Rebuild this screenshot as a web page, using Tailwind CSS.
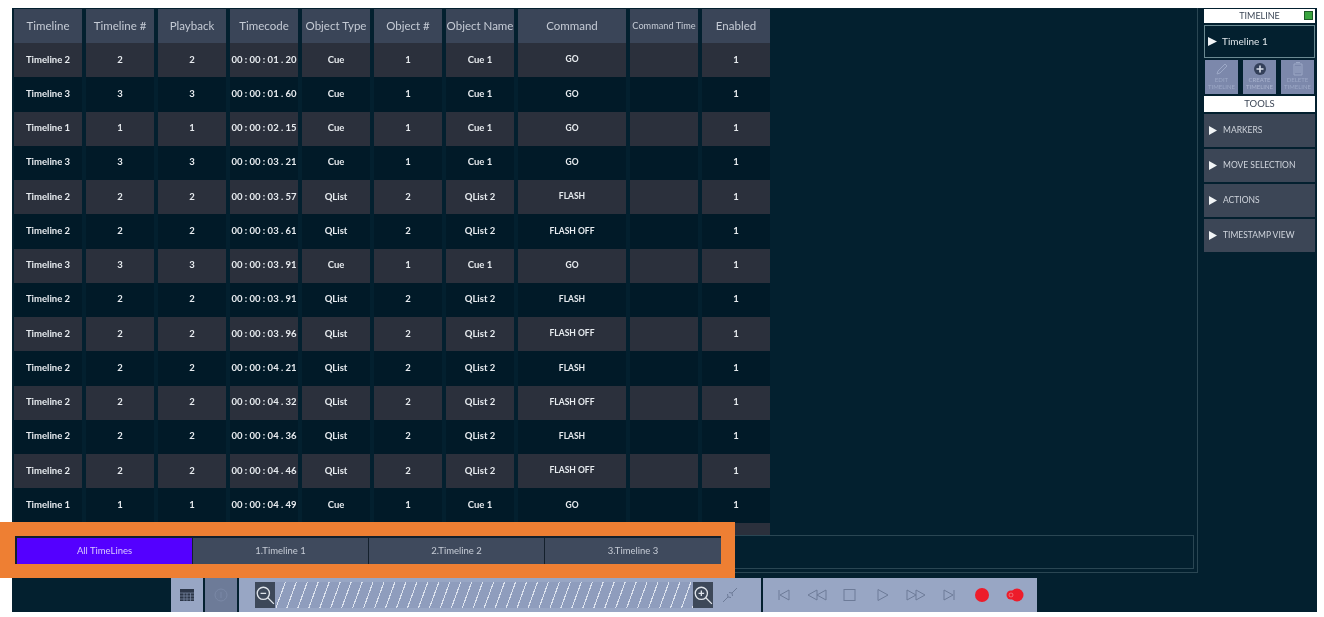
<!doctype html>
<html><head><meta charset="utf-8"><script src="https://cdn.jsdelivr.net/npm/@tailwindcss/browser@4"></script></head>
<body class="bg-white">
<div class="relative h-[617px] w-[1324px] overflow-hidden bg-white pl-3 pt-2 font-['Lato',sans-serif] blur-[0.3px]">
  <div class="flex h-[604px] w-[1305px] flex-col bg-[#03202f]">
    <div class="flex h-[565px]">
      <div class="flex w-[1186px] flex-col border-r border-b border-[#2a4653] pr-[3px]">
        <div class="h-[527px] overflow-hidden pl-[2px] pt-px whitespace-nowrap">
          <div class="grid h-[34px] w-[758px] grid-cols-[68px_68px_68px_68px_68px_68px_68px_108px_68px_68px] gap-x-1 text-center text-[11.5px] text-[#c5cbd5] [&>div]:flex [&>div]:items-center [&>div]:justify-center [&>div]:bg-[#3a4558]">
            <div>Timeline</div><div>Timeline #</div><div>Playback</div><div>Timecode</div><div>Object Type</div><div>Object #</div><div>Object Name</div><div>Command</div><div class="text-[9.2px]">Command Time</div><div>Enabled</div>
          </div>
          <div class="grid w-[758px] auto-rows-[34.25px] grid-cols-[68px_68px_68px_68px_68px_68px_68px_108px_68px_68px] gap-x-1 text-center text-[9.5px] font-bold text-[#e8ecf0] [&>div]:flex [&>div]:items-center [&>div]:justify-center [&>div]:pb-px [&>div:nth-child(10n+8)]:text-[8.5px] [&>div:nth-child(20n+1)]:bg-[#2b303c] [&>div:nth-child(20n+2)]:bg-[#2b303c] [&>div:nth-child(20n+3)]:bg-[#2b303c] [&>div:nth-child(20n+4)]:bg-[#2b303c] [&>div:nth-child(20n+5)]:bg-[#2b303c] [&>div:nth-child(20n+6)]:bg-[#2b303c] [&>div:nth-child(20n+7)]:bg-[#2b303c] [&>div:nth-child(20n+8)]:bg-[#2b303c] [&>div:nth-child(20n+9)]:bg-[#2b303c] [&>div:nth-child(20n+10)]:bg-[#2b303c] [&>div:nth-child(20n+11)]:bg-[#011a28] [&>div:nth-child(20n+12)]:bg-[#011a28] [&>div:nth-child(20n+13)]:bg-[#011a28] [&>div:nth-child(20n+14)]:bg-[#011a28] [&>div:nth-child(20n+15)]:bg-[#011a28] [&>div:nth-child(20n+16)]:bg-[#011a28] [&>div:nth-child(20n+17)]:bg-[#011a28] [&>div:nth-child(20n+18)]:bg-[#011a28] [&>div:nth-child(20n+19)]:bg-[#011a28] [&>div:nth-child(20n+20)]:bg-[#011a28]">
            <div>Timeline 2</div><div>2</div><div>2</div><div>00 : 00 : 01 . 20</div><div>Cue</div><div>1</div><div>Cue 1</div><div>GO</div><div></div><div>1</div>
            <div>Timeline 3</div><div>3</div><div>3</div><div>00 : 00 : 01 . 60</div><div>Cue</div><div>1</div><div>Cue 1</div><div>GO</div><div></div><div>1</div>
            <div>Timeline 1</div><div>1</div><div>1</div><div>00 : 00 : 02 . 15</div><div>Cue</div><div>1</div><div>Cue 1</div><div>GO</div><div></div><div>1</div>
            <div>Timeline 3</div><div>3</div><div>3</div><div>00 : 00 : 03 . 21</div><div>Cue</div><div>1</div><div>Cue 1</div><div>GO</div><div></div><div>1</div>
            <div>Timeline 2</div><div>2</div><div>2</div><div>00 : 00 : 03 . 57</div><div>QList</div><div>2</div><div>QList 2</div><div>FLASH</div><div></div><div>1</div>
            <div>Timeline 2</div><div>2</div><div>2</div><div>00 : 00 : 03 . 61</div><div>QList</div><div>2</div><div>QList 2</div><div>FLASH OFF</div><div></div><div>1</div>
            <div>Timeline 3</div><div>3</div><div>3</div><div>00 : 00 : 03 . 91</div><div>Cue</div><div>1</div><div>Cue 1</div><div>GO</div><div></div><div>1</div>
            <div>Timeline 2</div><div>2</div><div>2</div><div>00 : 00 : 03 . 91</div><div>QList</div><div>2</div><div>QList 2</div><div>FLASH</div><div></div><div>1</div>
            <div>Timeline 2</div><div>2</div><div>2</div><div>00 : 00 : 03 . 96</div><div>QList</div><div>2</div><div>QList 2</div><div>FLASH OFF</div><div></div><div>1</div>
            <div>Timeline 2</div><div>2</div><div>2</div><div>00 : 00 : 04 . 21</div><div>QList</div><div>2</div><div>QList 2</div><div>FLASH</div><div></div><div>1</div>
            <div>Timeline 2</div><div>2</div><div>2</div><div>00 : 00 : 04 . 32</div><div>QList</div><div>2</div><div>QList 2</div><div>FLASH OFF</div><div></div><div>1</div>
            <div>Timeline 2</div><div>2</div><div>2</div><div>00 : 00 : 04 . 36</div><div>QList</div><div>2</div><div>QList 2</div><div>FLASH</div><div></div><div>1</div>
            <div>Timeline 2</div><div>2</div><div>2</div><div>00 : 00 : 04 . 46</div><div>QList</div><div>2</div><div>QList 2</div><div>FLASH OFF</div><div></div><div>1</div>
            <div>Timeline 1</div><div>1</div><div>1</div><div>00 : 00 : 04 . 49</div><div>Cue</div><div>1</div><div>Cue 1</div><div>GO</div><div></div><div>1</div>
            <div></div><div></div><div></div><div></div><div></div><div></div><div></div><div></div><div></div><div></div>
          </div>
        </div>
        <div class="h-[34px] border border-[#2a4653]"></div>
      </div>
      <div class="ml-[6px] flex w-[111px] flex-col pt-px">
        <div class="relative flex h-[14px] items-center justify-center bg-white text-[9px] text-[#3c4656]">TIMELINE
          <span class="absolute right-[2px] top-[2px] size-[9px] border border-[#1d5b27] bg-[#3aa53f]"></span>
        </div>
        <div class="mt-[2px] flex h-[33px] items-center gap-[5px] border border-[#6b8a92] bg-[#03202f] pl-[3px] text-[10px] text-[#dfe5ea]">
          <svg width="9" height="9" viewBox="0 0 9 9"><path d="M0 0L9 4.500L0 9Z" fill="#f1f4f6"/></svg>Timeline 1
        </div>
        <div class="mt-[2px] flex h-[34px] justify-between px-px text-center text-[6px] leading-[7px]">
          <div class="flex w-[33px] flex-col items-center bg-[#7c88ab] text-[#9ca8c6]">
            <svg class="mt-[2px]" width="14" height="14" viewBox="0 0 14 14" fill="none" stroke="#9ca8c6"><path d="M3 9L10 2L12 4L5 11L2 12Z"/></svg><span>EDIT<br>TIMELINE</span>
          </div>
          <div class="flex w-[33px] flex-col items-center bg-[#7c88ab] text-[#a9b3cf]">
            <svg class="mt-[2px]" width="14" height="14" viewBox="0 0 14 14"><circle cx="7" cy="7" r="6" fill="#34405a"/><path d="M7 3.500V10.500M3.500 7H10.500" stroke="#d8deea" stroke-width="1.6"/></svg><span>CREATE<br>TIMELINE</span>
          </div>
          <div class="flex w-[33px] flex-col items-center bg-[#7c88ab] text-[#9ca8c6]">
            <svg class="mt-[2px]" width="14" height="14" viewBox="0 0 14 14" fill="none" stroke="#9ca8c6"><path d="M3 2H11V13H3ZM5 0.500H9M5 4V11M7 4V11M9 4V11"/></svg><span>DELETE<br>TIMELINE</span>
          </div>
        </div>
        <div class="mt-[2px] flex h-[16px] items-center justify-center bg-white text-[9.5px] text-[#3c4656]">TOOLS</div>
        <div class="mt-[2px] flex flex-col gap-[2px] text-[8.5px] text-[#d0d5dd] [&>div]:flex [&>div]:h-[33px] [&>div]:items-center [&>div]:gap-[6px] [&>div]:bg-[#3c4656] [&>div]:pl-[5px]">
          <div><svg width="8" height="9" viewBox="0 0 8 9"><path d="M0 0L8 4.500L0 9Z" fill="#f1f4f6"/></svg>MARKERS</div>
          <div><svg width="8" height="9" viewBox="0 0 8 9"><path d="M0 0L8 4.500L0 9Z" fill="#f1f4f6"/></svg>MOVE SELECTION</div>
          <div><svg width="8" height="9" viewBox="0 0 8 9"><path d="M0 0L8 4.500L0 9Z" fill="#f1f4f6"/></svg>ACTIONS</div>
          <div><svg width="8" height="9" viewBox="0 0 8 9"><path d="M0 0L8 4.500L0 9Z" fill="#f1f4f6"/></svg>TIMESTAMP VIEW</div>
        </div>
      </div>
    </div>
    <div class="mt-auto ml-[159px] flex h-[34px] w-[866px] gap-[2px]">
      <div class="flex w-[32px] items-center justify-center bg-[#98a6c4]"><svg width="14" height="12" viewBox="0 0 14 12"><path fill="#2c3648" d="M0 0H14V12H0Z"/><path stroke="#7e8cab" stroke-width=".7" d="M0 4H14M0 7H14M0 10H14M4 4V12M7 4V12M10.500 4V12"/></svg></div>
      <div class="flex w-[32px] items-center justify-center bg-[#6d7b98]"><svg width="14" height="14" viewBox="0 0 14 14" fill="none" stroke="#7a88a6"><circle cx="7" cy="7" r="6"/><path d="M7 4V10"/></svg></div>
      <div class="flex w-[522px] items-center bg-[#98a6c4] pl-[16px]">
        <div class="flex h-[26px] w-[458px] items-stretch">
          <div class="flex w-[20px] items-center justify-center bg-[#3d4859]"><svg width="20" height="20" viewBox="0 0 18 18" fill="none" stroke="#dfe4ea" stroke-width="1.2"><circle cx="7.500" cy="7.500" r="5.500"/><path d="M5 7.500H10M11.500 11.500L17 17"/></svg></div>
          <div class="flex-1 bg-[repeating-linear-gradient(110deg,#8f9dbd_0,#8f9dbd_9.200px,#dde3ee_9.200px,#dde3ee_10.300px)]"></div>
          <div class="flex w-[20px] items-center justify-center bg-[#3d4859]"><svg width="20" height="20" viewBox="0 0 18 18" fill="none" stroke="#dfe4ea" stroke-width="1.2"><circle cx="7.500" cy="7.500" r="5.500"/><path d="M5 7.500H10M7.500 5V10M11.500 11.500L17 17"/></svg></div>
        </div>
        <svg class="ml-[9px]" width="16" height="16" viewBox="0 0 16 16" fill="none" stroke="#6d7b98"><path d="M1 15L6 10M10 6L15 1M5.500 7L6 10L9 10.500M7 5.500L10 6L10.500 9"/></svg>
      </div>
      <div class="flex w-[274px] items-center bg-[#98a6c4] pl-[4px] [&>*]:flex [&>*]:w-[33px] [&>*]:items-center [&>*]:justify-center">
        <span><svg width="12" height="12" viewBox="0 0 12 12" fill="none" stroke="#6d7b98"><path d="M1 1V11M11 1V11L2 6Z"/></svg></span>
        <span><svg width="20" height="12" viewBox="0 0 20 12" fill="none" stroke="#6d7b98"><path d="M10 1V11L1 6ZM19 1V11L10 6Z"/></svg></span>
        <span><svg width="13" height="12" viewBox="0 0 13 12" fill="none" stroke="#6d7b98"><rect x="1" y="0.500" width="11" height="11"/></svg></span>
        <span><svg width="12" height="12" viewBox="0 0 12 12" fill="none" stroke="#6d7b98"><path d="M1 0.500V11.500L11 6Z"/></svg></span>
        <span><svg width="20" height="12" viewBox="0 0 20 12" fill="none" stroke="#6d7b98"><path d="M1 1V11L10 6ZM10 1V11L19 6Z"/></svg></span>
        <span><svg width="12" height="12" viewBox="0 0 12 12" fill="none" stroke="#6d7b98"><path d="M1 1V11L10 6ZM11 1V11"/></svg></span>
        <span><svg width="14" height="14" viewBox="0 0 14 14"><circle cx="7" cy="7" r="7" fill="#ed1c2a"/></svg></span>
        <span><svg width="18" height="14" viewBox="0 0 18 14"><circle cx="5" cy="7" r="4.500" fill="#ed1c2a"/><circle cx="11" cy="7" r="6.500" fill="#ed1c2a"/><circle cx="5" cy="7" r="2" fill="none" stroke="#f58a8f" stroke-width=".7"/></svg></span>
      </div>
    </div>
  </div>
  <div class="absolute left-0 top-[522px] h-[56px] w-[735px] border-y-[14px] border-r-[14px] border-l-[15px] border-[#ee7f33] bg-[#14202c] pl-[2px] pt-[2px]">
    <div class="flex h-full gap-px text-[9.5px] text-[#c6ccd6] [&>div]:flex [&>div]:items-center [&>div]:justify-center [&>div]:bg-[#3f4a5d]">
      <div class="w-[175px] !bg-[#5400ff] text-[#d8c8ff]">All TimeLines</div>
      <div class="w-[175px]">1.Timeline 1</div>
      <div class="w-[175px]">2.Timeline 2</div>
      <div class="flex-1">3.Timeline 3</div>
    </div>
  </div>
</div>
</body></html>
